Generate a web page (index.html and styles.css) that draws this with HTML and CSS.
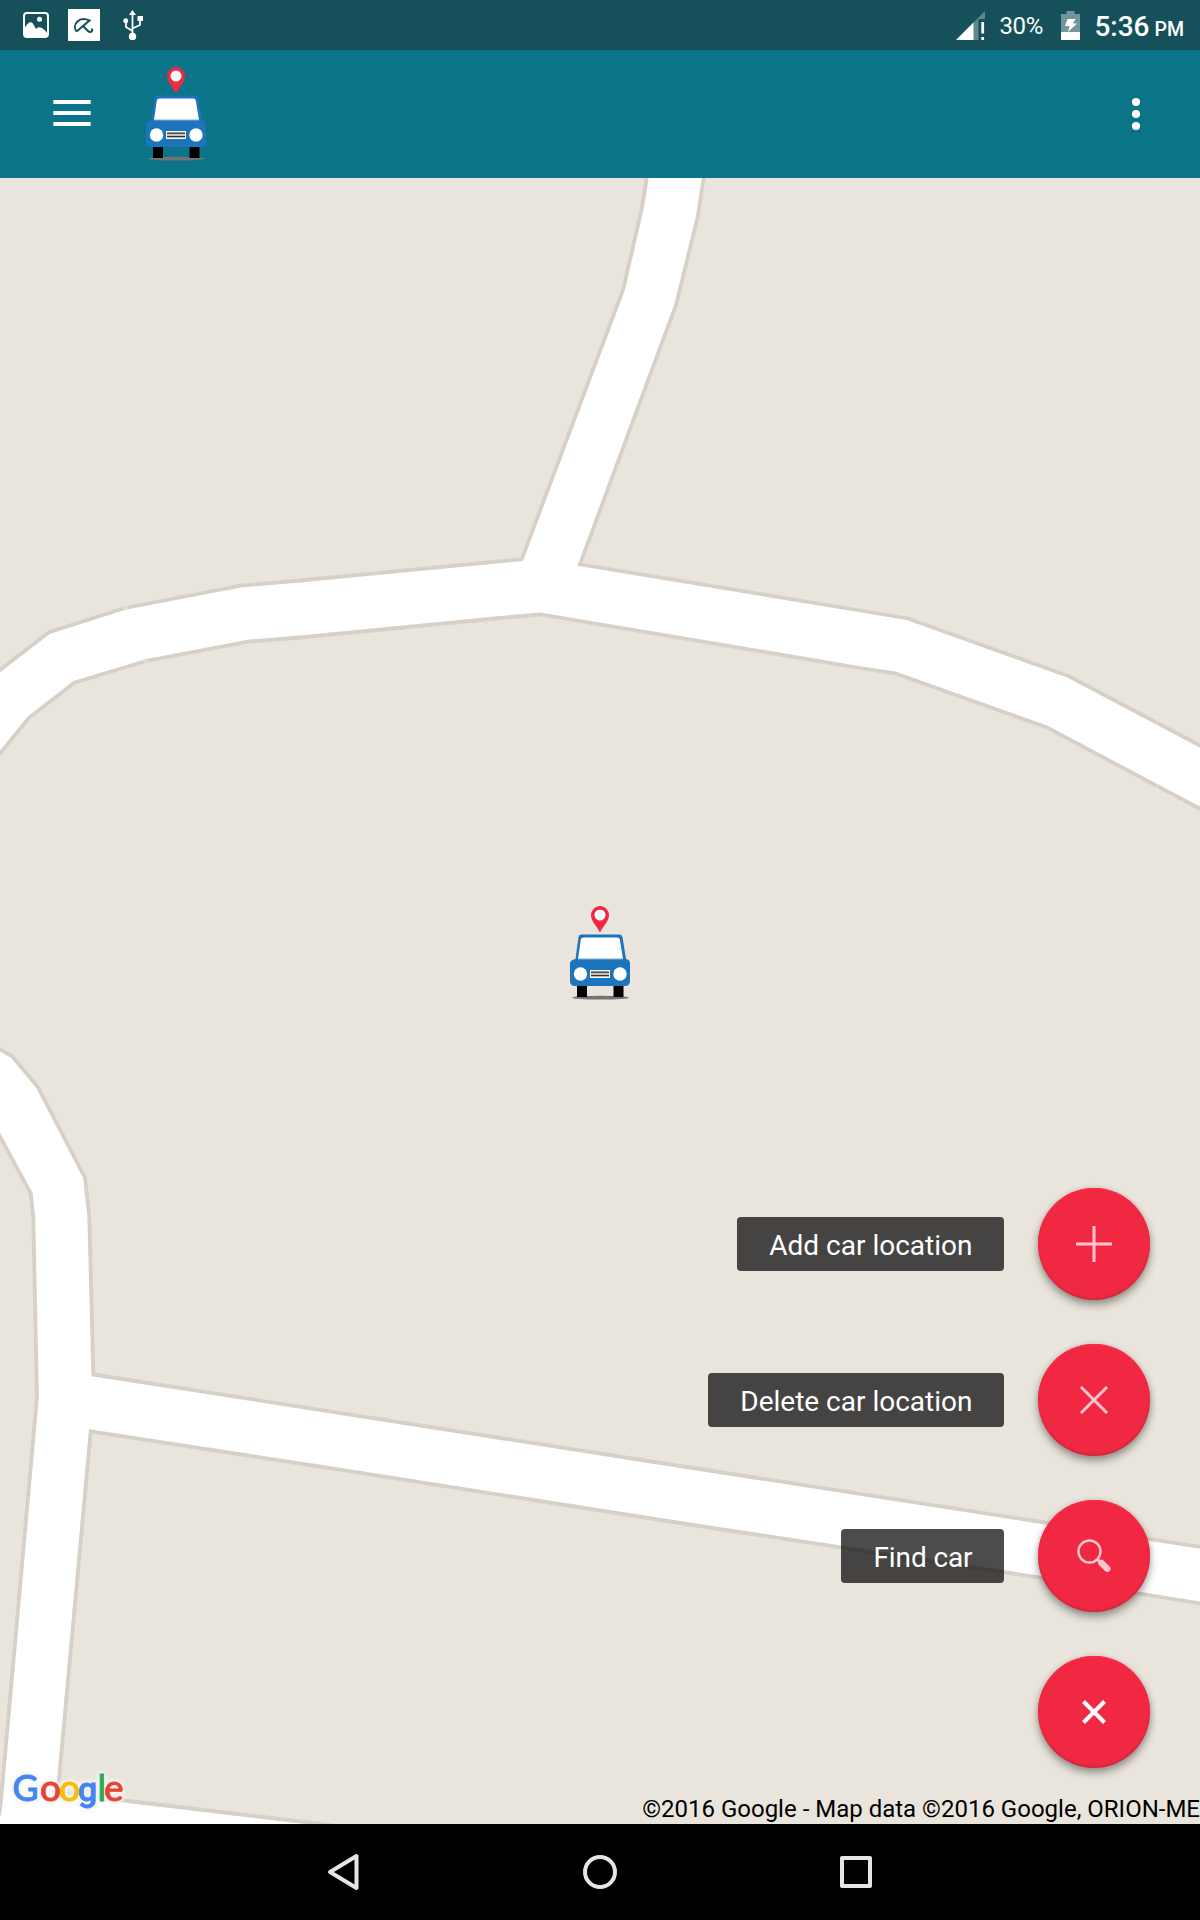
FILE: index.html
```html
<!DOCTYPE html>
<html lang="en">
<head>
<meta charset="utf-8">
<title>Car locator</title>
<link rel="stylesheet" href="styles.css">
</head>
<body>
<svg class="defs" aria-hidden="true">
  <symbol id="car" viewBox="0 0 60 94">
    <path fill="#f02842" d="M30 26.500C27 20 21 15.500 21 9a9 9 0 0 1 18 0c0 6.500-6 11-9 17.500z"/>
    <circle cx="30" cy="9" r="5.500" fill="#f3fafe"/>
    <ellipse cx="30.500" cy="91.700" rx="28.500" ry="1.900" fill="#737373"/>
    <path fill="#1c75bc" d="M11 28.500h38.500q2.500 0 3 2.500L56 53q4 .5 4 4.500V75q0 5-5 5H5q-5 0-5-5V57.500Q0 54 5.500 53L8.500 31q.5-2.500 2.500-2.500z"/>
    <path fill="#000" d="M7 80h10v11H7zM43.500 80h10v11h-10z"/>
    <path fill="#fff" d="M13.500 31.500h33.500q2.500 0 2.800 2L53 53H8l2.800-19.500q.3-2 2.700-2z"/>
    <path stroke="#7db0da" d="M8 53h45"/>
    <circle cx="10.500" cy="68" r="6.700" fill="#fff"/>
    <circle cx="50" cy="68" r="6.700" fill="#fff"/>
    <path fill="#fff" d="M20 64h20v8H20z"/>
    <path fill="#c2c2c2" d="M21 65.500h18v5H21z"/>
    <path stroke="#333" stroke-width="1.200" d="M21 66.200h18M21 69.600h18"/>
  </symbol>
</svg>

<header class="status-bar">
  <div class="status-group">
    <svg width="26" height="26" viewBox="0 0 26 26"><rect x="1" y="1" width="24" height="24" rx="3" fill="none" stroke="#fff" stroke-width="2"/><circle cx="16.500" cy="7.200" r="2.500" fill="#fff"/><path fill="#fff" d="M2 15.500C4 12 6 10 8 10.300s3.500 4 5 6.700c2-2 3.500-2.200 5.500-1.200 2.500 1.500 4 3 5.500 5.200v3q0 1-1 1H3q-1 0-1-1z"/></svg>
    <svg width="32" height="32" viewBox="0 0 32 32"><path fill="#fff" d="M0 0h32v32H0z"/><g fill="none" stroke="#15505b" stroke-width="2"><path d="M8.500 22.500C3.500 16 11 6.500 21.500 11.500L8.500 22.500"/><path d="M14.500 16.500l5.500 5.500c2.500 2.500 5 0 4-2.500"/></g></svg>
    <svg width="20" height="30" viewBox="0 0 20 30"><g fill="none" stroke="#fff" stroke-width="1.800"><path d="M9.500 25V4M9.500 21 3 17v-6M9.500 18.500l7.500-3.500V9"/></g><circle cx="9.500" cy="26.500" r="3.700" fill="#fff"/><circle cx="2.700" cy="10.700" r="2.500" fill="#fff"/><path fill="#fff" d="M14.500 6H20v5h-5.500zM9.500 0 13 5H6z"/></svg>
  </div>
  <div class="status-group status-right">
    <svg width="29" height="29" viewBox="0 0 29 29"><path fill="#5d888f" d="M29 0v8h-6.500v21H0z"/><path fill="#fff" d="M17.500 11.500V29H0zM25.300 11h2.800v11.500h-2.800zM25.300 26h2.800v3h-2.800z"/></svg>
    <span class="percent">30%</span>
    <svg class="battery" width="19" height="29" viewBox="0 0 19 29"><path fill="#72969c" d="M5.500 0h8v3H19v18H0V3h5.500z"/><path fill="#fff" d="M0 21h19v8H0zM6.500 8h8l-2.500 4.500h4L7 21l1.500-6H4z"/></svg>
    <span class="clock">5:36 <small>PM</small></span>
  </div>
</header>

<nav class="app-bar">
  <svg class="menu" width="38" height="26" viewBox="0 0 38 26"><path fill="#fff" d="M.3 0h37.400v4H.3zM.3 11h37.400v4H.3zM.3 22h37.400v4H.3z"/></svg>
  <svg class="logo" width="60" height="94"><use href="#car"/></svg>
  <svg class="more" width="8" height="32" viewBox="0 0 8 32" fill="#fff"><circle cx="4" cy="4" r="4"/><circle cx="4" cy="16" r="4"/><circle cx="4" cy="28" r="4"/></svg>
</nav>

<main class="map">
  <svg class="roads" viewBox="0 178 1200 1646">
    <g class="land">
      <path d="M-10 160H648L646.700 178 642 208 623 290 521.700 559.300 300 580.500 241 585.700 125 608 49 632.300 0 670-10 678z"/>
      <path d="M705 160 703.700 178 697.500 218 676 305 580 564.300 860 610.500 908 618.500 1069 676.300 1200 745.500 1210 751V160z"/>
      <path d="M-10 765 0 753.500 28.700 718 74.300 682.700 145.700 661 249.300 641.500 300 637.500 500 618 540.300 614.300 860 668 895 673.300 1046.500 727.300 1200 808.700 1210 814V1548.500L1045 1522.500 680 1466 93.300 1374.500 89.300 1216.700 85 1177.700 38 1087.300 12 1056 0 1049.500-10 1045z"/>
      <path d="M-10 1118 0 1136.700 30.700 1193.300 33.300 1218 37 1396.700 4 1766.700 0 1810-10 1850z"/>
      <path d="M90.700 1431.300 340 1469.700 680 1523 1045 1578.300 1210 1605V1840H450L310 1822.700 128 1801 57.700 1793z"/>
    </g>
    <path class="gap" d="M123.500 608.700l4-1.300M143.500 661.500l4-1.200"/>
    <path class="seam" d="M1157.500 178V1824"/>
    <g class="google"><text y="1801"><tspan class="g-blue g-cap" x="12.500">G</tspan><tspan class="g-red" x="40">o</tspan><tspan class="g-yellow" x="59">o</tspan><tspan class="g-blue g-tail" x="78">g</tspan><tspan class="g-green" x="97.500">l</tspan><tspan class="g-red" x="104">e</tspan></text></g>
  </svg>
  <svg class="marker" width="60" height="94"><use href="#car"/></svg>
  <div class="actions">
    <div class="action"><span class="label">Add car location</span><button class="fab" aria-label="Add"><svg viewBox="-56 -56 112 112"><path stroke="#ffc6d0" stroke-width="3" d="M-18 0H18M0-18V18"/></svg></button></div>
    <div class="action"><span class="label">Delete car location</span><button class="fab" aria-label="Delete"><svg viewBox="-56 -56 112 112"><path stroke="#ffc6d0" stroke-width="3" d="M-13-13 13 13M13-13-13 13"/></svg></button></div>
    <div class="action"><span class="label label-find">Find car</span><button class="fab" aria-label="Find"><svg viewBox="-56 -56 112 112"><circle cx="-4.500" cy="-4.500" r="11" fill="none" stroke="#ffc6d0" stroke-width="2.400"/><path stroke="#ffc6d0" stroke-width="3" d="M3 3 6 6"/><path stroke="#ffc6d0" stroke-width="6.400" stroke-linecap="round" d="M7.500 7 13.300 12.800"/></svg></button></div>
    <div class="action"><button class="fab" aria-label="Close"><svg viewBox="-56 -56 112 112"><path stroke="#fff" stroke-width="4" d="M-10.500-10.500 10.500 10.500M10.500-10.500-10.500 10.500"/></svg></button></div>
  </div>
  <div class="copyright">©2016 Google - Map data ©2016 Google, ORION-ME</div>
</main>

<footer class="nav-bar">
  <svg width="34" height="40" viewBox="0 0 34 40"><path d="M29.500 4V36L3 20z"/></svg>
  <svg width="34" height="40" viewBox="0 0 34 40"><circle cx="17" cy="20" r="15"/></svg>
  <svg width="34" height="40" viewBox="0 0 34 40"><rect x="3" y="6" width="28" height="28"/></svg>
</footer>
</body>
</html>
```
FILE: styles.css
```css
* { box-sizing: border-box; }

body {
  margin: 0;
  width: 1200px;
  height: 1920px;
  display: flex;
  flex-direction: column;
  overflow: hidden;
  font-family: Roboto, sans-serif;
}

svg { display: block; flex: none; }
.defs { position: absolute; width: 0; height: 0; }

.status-bar {
  height: 50px;
  padding: 0 16px 0 23px;
  display: flex;
  justify-content: space-between;
  background: #15505b;
  color: #fff;
}
.status-group { display: flex; align-items: center; gap: 19px; }
.status-group svg + svg:last-child { margin-left: 4px; }
.status-right { gap: 0; }
.percent { font-size: 24px; letter-spacing: -.3px; margin-left: 14px; width: 46px; padding-top: 2px; }
.battery { margin: 0 14px 0 16px; }
.clock { font-size: 28px; font-weight: 500; padding-top: 2px; white-space: nowrap; }
.clock small { font-size: 19.500px; margin-left: -2px; }

.app-bar {
  height: 128px;
  padding: 0 60px 0 53px;
  display: flex;
  align-items: center;
  background: #0b7489;
}
.app-bar .menu { margin-bottom: 2px; }
.app-bar .logo { margin-left: 55px; }
.app-bar .more { margin-left: auto; }

.map { position: relative; height: 1646px; background: #fff; overflow: hidden; }
.roads { width: 1200px; height: 1646px; }
.land { fill: #e9e5dc; stroke: #d6d0c6; stroke-width: 3.8; }
.gap { stroke: #e3dfd8; stroke-width: 4; }
.seam { stroke: #fff; stroke-opacity: .25; stroke-width: 1; }

.google {
  font: 500 37px Lato, sans-serif;
  filter: drop-shadow(0 0 2px #f5f4f1) drop-shadow(0 0 1px #f5f4f1) drop-shadow(0 0 1px #f5f4f1);
}
.g-blue { fill: #4285f4; stroke: #4285f4; stroke-width: .8; }
.g-red { fill: #ea4335; stroke: #ea4335; stroke-width: .8; }
.g-yellow { fill: #fbbc05; stroke: #fbbc05; stroke-width: .8; }
.g-green { fill: #34a853; stroke: #34a853; stroke-width: .8; }
.g-cap { font-size: 36px; }
.g-tail { font-family: Roboto, sans-serif; font-size: 34px; }

.marker { position: absolute; left: 570px; top: 728px; }

.actions {
  position: absolute;
  right: 50px;
  bottom: 56px;
  display: flex;
  flex-direction: column;
  gap: 44px;
}
.action { display: flex; justify-content: flex-end; align-items: center; gap: 34px; }
.label {
  height: 54px;
  padding: 0 31.500px 0 32.500px;
  line-height: 58px;
  border-radius: 4px;
  background: rgba(0, 0, 0, .7);
  color: #fff;
  font-size: 28px;
}
.label-find { letter-spacing: -.1px; }
.fab {
  width: 112px;
  height: 112px;
  padding: 0;
  border: 0;
  border-radius: 50%;
  background: #f02842;
  box-shadow: 0 5px 9px rgba(0, 0, 0, .36), 0 0 5px rgba(0, 0, 0, .12), inset 0 -2px 2px rgba(0, 0, 0, .1), inset 0 2px 1px #ff2846;
}

.copyright {
  position: absolute;
  right: 0;
  bottom: 1px;
  font-size: 24px;
  line-height: 28px;
  color: #000;
  white-space: nowrap;
}

.nav-bar {
  height: 96px;
  display: flex;
  justify-content: center;
  align-items: center;
  gap: 222px;
  background: #000;
}
.nav-bar svg { fill: none; stroke: #e6e6e6; stroke-width: 4; stroke-linejoin: round; }
```
